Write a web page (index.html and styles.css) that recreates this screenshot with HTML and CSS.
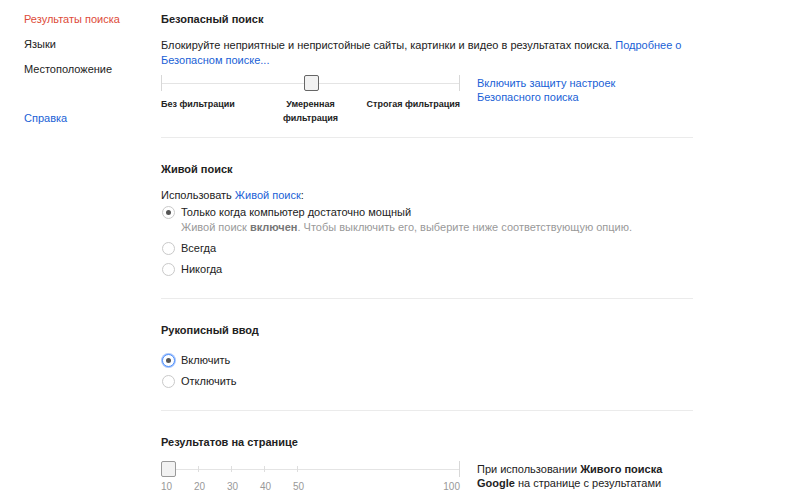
FILE: index.html
```html
<!DOCTYPE html>
<html lang="ru">
<head>
    <meta charset="UTF-8">
    <meta name="viewport" content="width=device-width, initial-scale=1.0">
    <title>Настройки поиска</title>
    <link rel="stylesheet" href="styles.css">
</head>
<body>
    <div class="page">
        <div class="nav">
            <a class="nav-item active" href="#">Результаты поиска</a>
            <a class="nav-item" href="#">Языки</a>
            <a class="nav-item" href="#">Местоположение</a>
            <a class="nav-item help" href="#">Справка</a>
        </div>

        <div class="main">
            <div class="section first">
                <h2>Безопасный поиск</h2>
                <p class="desc">Блокируйте неприятные и непристойные сайты, картинки и видео в результатах поиска. <a href="#">Подробнее о Безопасном поиске...</a></p>
                <div class="slider-row">
                    <div class="slider">
                        <div class="track">
                            <span class="thumb thumb-middle"></span>
                        </div>
                        <div class="levels">
                            <span class="level-left">Без фильтрации</span>
                            <span class="level-mid">Умеренная фильтрация</span>
                            <span class="level-right">Строгая фильтрация</span>
                        </div>
                    </div>
                    <a class="side-link" href="#">Включить защиту настроек Безопасного поиска</a>
                </div>
            </div>

            <div class="section">
                <h2>Живой поиск</h2>
                <p class="lead">Использовать <a href="#">Живой поиск</a>:</p>
                <div class="option">
                    <span class="radio checked"></span>
                    <div>
                        <div>Только когда компьютер достаточно мощный</div>
                        <div class="hint">Живой поиск <b>включен</b>. Чтобы выключить его, выберите ниже соответствующую опцию.</div>
                    </div>
                </div>
                <div class="option">
                    <span class="radio"></span>
                    <div>Всегда</div>
                </div>
                <div class="option">
                    <span class="radio"></span>
                    <div>Никогда</div>
                </div>
            </div>

            <div class="section">
                <h2 class="gap">Рукописный ввод</h2>
                <div class="option">
                    <span class="radio checked focused"></span>
                    <div>Включить</div>
                </div>
                <div class="option">
                    <span class="radio"></span>
                    <div>Отключить</div>
                </div>
            </div>

            <div class="section last">
                <h2>Результатов на странице</h2>
                <div class="slider-row">
                    <div class="slider">
                        <div class="track scale">
                            <span class="thumb thumb-start"></span>
                            <span class="step"></span>
                            <span class="step"></span>
                            <span class="step"></span>
                            <span class="step"></span>
                            <span class="step"></span>
                        </div>
                        <div class="numbers">
                            <span>10</span>
                            <span>20</span>
                            <span>30</span>
                            <span>40</span>
                            <span>50</span>
                            <span class="num-end">100</span>
                        </div>
                    </div>
                    <p class="side-note">При использовании <b>Живого поиска Google</b> на странице с результатами</p>
                </div>
            </div>
        </div>
    </div>
</body>
</html>
```

FILE: styles.css
```css
body {
    margin: 0;
    padding: 0;
    font-family: "Liberation Sans", Arial, sans-serif;
    font-size: 11px;
    color: #222;
    background-color: #fff;
}

a {
    color: #1a5fd6;
    text-decoration: none;
}

.page {
    display: flex;
    height: 490px;
    overflow: hidden;
}

.nav {
    width: 137px;
    padding: 12px 0 0 24px;
    display: flex;
    flex-direction: column;
}

.nav-item {
    color: #222;
    line-height: 15px;
    margin-bottom: 10px;
}

.nav-item.active {
    color: #dd4b39;
}

.nav-item.help {
    color: #1a5fd6;
    margin-top: 24px;
}

.main {
    width: 532px;
}

.section {
    padding: 23px 0 21px;
    border-bottom: 1px solid #ebebeb;
}

.section.first {
    padding: 11px 0 12px;
}

.section.last {
    border-bottom: none;
}

h2 {
    font-size: 11px;
    font-weight: bold;
    line-height: 16px;
    margin: 0 0 11px;
}

h2.gap {
    margin-bottom: 15px;
}

.desc {
    margin: 0 0 7px;
    line-height: 15px;
}

.lead {
    margin: 0 0 2px;
    line-height: 15px;
}

/* sliders */

.slider-row {
    display: flex;
    gap: 17px;
}

.slider {
    width: 299px;
}

.track {
    position: relative;
    height: 16px;
    background: linear-gradient(#e4e4e4, #e4e4e4) no-repeat 0 50% / 100% 1px;
    border-left: 1px solid #d8d8d8;
    border-right: 1px solid #d8d8d8;
    box-sizing: border-box;
}

.thumb {
    position: absolute;
    top: 0;
    width: 13px;
    height: 14px;
    border: 1px solid #666;
    border-radius: 2px;
    background: #f2f2f2;
}

.thumb-middle {
    left: 50%;
    margin-left: -7px;
}

.thumb-start {
    left: 0;
    border-color: #999;
}

.levels {
    display: grid;
    grid-template-columns: 1fr 80px 1fr;
    font-size: 9px;
    font-weight: bold;
    line-height: 14px;
    margin-top: 6px;
}

.level-mid {
    text-align: center;
}

.level-right {
    text-align: right;
}

.side-link {
    line-height: 14px;
    width: 160px;
    margin-top: 1px;
}

/* results per page */

.scale {
    display: flex;
    border-left: none;
}

.step {
    width: 33px;
    position: relative;
}

.step::after {
    content: "";
    position: absolute;
    left: 37px;
    top: 5px;
    height: 6px;
    border-left: 1px solid #dedede;
}

.step:nth-child(6)::after {
    display: none;
}

.numbers {
    display: flex;
    font-size: 10px;
    color: #999;
    line-height: 14px;
    margin-top: 3px;
}

.numbers span {
    width: 33px;
}

.numbers .num-end {
    width: auto;
    margin-left: auto;
}

.side-note {
    margin: 1px 0 0;
    line-height: 14px;
    width: 195px;
}

/* radios */

.option {
    display: flex;
    align-items: flex-start;
    gap: 6px;
    line-height: 15px;
    margin-bottom: 6px;
}

.option:last-child {
    margin-bottom: 0;
}

.radio {
    width: 11px;
    height: 11px;
    margin: 1px 0 0 1px;
    border: 1px solid #c9c9c9;
    border-radius: 50%;
    background: #fff;
    position: relative;
    flex-shrink: 0;
}

.radio.checked::after {
    content: "";
    position: absolute;
    left: 3px;
    top: 3px;
    width: 5px;
    height: 5px;
    border-radius: 50%;
    background: #555;
}

.radio.focused {
    border-color: #4d90fe;
    box-shadow: 0 0 0 1px #a9c6fb;
}

.hint {
    color: #999;
}

.hint b {
    color: #777;
}
```
